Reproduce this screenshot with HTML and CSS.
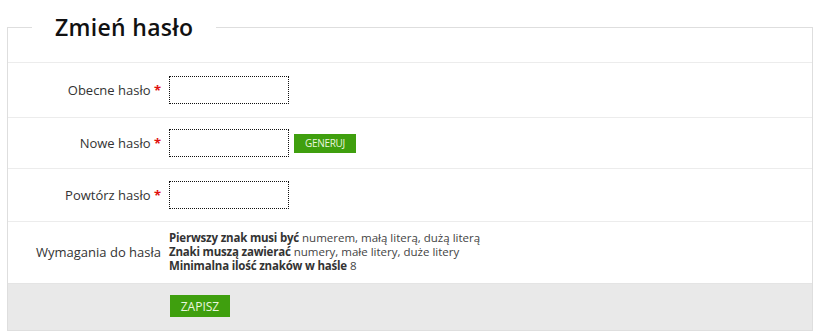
FILE: index.html
```html
<!DOCTYPE html>
<html lang="pl">
<head>
    <meta charset="UTF-8">
    <meta name="viewport" content="width=device-width, initial-scale=1.0">
    <title>Zmień hasło</title>
    <link rel="stylesheet" href="styles.css">
</head>
<body>

    <form class="panel" id="passwordForm">
        <fieldset>
            <legend>Zmień hasło</legend>

            <div class="row">
                <label class="row-label" for="current">Obecne hasło <span class="req">*</span></label>
                <input type="password" id="current" name="current">
            </div>

            <div class="row">
                <label class="row-label" for="new">Nowe hasło <span class="req">*</span></label>
                <input type="password" id="new" name="new">
                <button type="button" class="btn btn-small">Generuj</button>
            </div>

            <div class="row">
                <label class="row-label" for="repeat">Powtórz hasło <span class="req">*</span></label>
                <input type="password" id="repeat" name="repeat">
            </div>

            <div class="row row-rules">
                <span class="row-label">Wymagania do hasła</span>
                <div class="rules">
                    <div><b>Pierwszy znak musi być</b> numerem, małą literą, dużą literą</div>
                    <div><b>Znaki muszą zawierać</b> numery, małe litery, duże litery</div>
                    <div><b>Minimalna ilość znaków w haśle</b> 8</div>
                </div>
            </div>

            <div class="actions">
                <button type="submit" class="btn">Zapisz</button>
            </div>
        </fieldset>
    </form>

</body>
</html>
```

FILE: styles.css
```css
/* Global Styles */
* {
    box-sizing: border-box;
    margin: 0;
    padding: 0;
}
body {
    font-family: "Open Sans", "Liberation Sans", sans-serif;
    background: #fff;
    color: #333;
    font-size: 13px;
}
.panel {
    margin: 12px 8px 0 7px;
}
fieldset {
    border: 1px solid #dedede;
    padding: 20px 0 0 0;
    min-width: 0;
}
legend {
    margin-left: 24px;
    padding: 0 23px;
    font-size: 23px;
    line-height: 30px;
    font-weight: 600;
    letter-spacing: 0.3px;
    color: #111;
}
.row {
    display: flex;
    align-items: center;
    gap: 8px;
    border-top: 1px solid #ececec;
    padding: 12px 0;
}
.row:nth-of-type(1) {
    padding: 13px 0;
}
.row:nth-of-type(2) {
    padding: 11px 0;
}
.row-rules {
    padding: 9px 0 10px;
}
.row-label {
    width: 153px;
    flex: none;
    text-align: right;
    color: #333;
}
.req {
    color: #e01010;
    font-weight: bold;
}
input {
    width: 120px;
    height: 28px;
    border: 1px dotted #111;
    font-family: inherit;
    font-size: 13px;
    padding: 0 4px;
    outline: none;
}
.btn {
    background-color: #3f9f0e;
    color: #eaf6df;
    border: none;
    font-family: inherit;
    font-size: 12px;
    text-transform: uppercase;
    width: 60px;
    height: 22px;
    cursor: pointer;
}
.btn-small {
    width: 62px;
    height: 19px;
    font-size: 10px;
    margin-left: -3px;
    letter-spacing: -0.3px;
}
.rules {
    font-size: 11.5px;
    line-height: 14px;
    color: #444;
}
.rules b {
    font-weight: 700;
    color: #333;
    letter-spacing: -0.2px;
}
.actions {
    background: #e9e9e9;
    border-top: 1px solid #e4e4e4;
    padding: 11px 0 13px 162px;
}
```
